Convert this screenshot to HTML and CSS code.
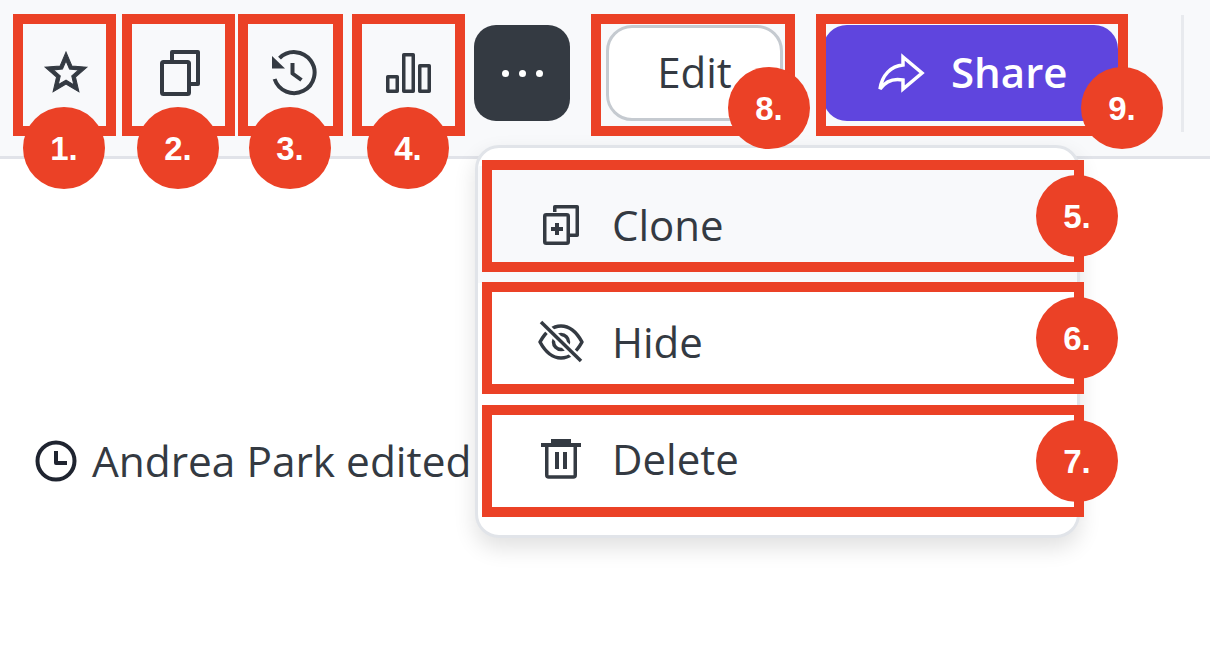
FILE: index.html
```html
<!DOCTYPE html>
<html lang="en">
  <head>
    <meta charset="UTF-8" />
    <meta name="viewport" content="width=device-width, initial-scale=1.0" />
    <title>Dashboard actions</title>
    <link rel="stylesheet" href="styles.css">
  </head>
  <body>
    <header class="toolbar">
      <button class="icon-btn">
        <svg class="icon-star" viewBox="0 0 24 24"><path d="M22 9.24l-7.19-.62L12 2 9.19 8.63 2 9.24l5.46 4.73L5.82 21 12 17.27 18.18 21l-1.63-7.03L22 9.24zM12 15.4l-3.76 2.27 1-4.28-3.32-2.88 4.38-.38L12 6.1l1.71 4.04 4.38.38-3.32 2.88 1 4.28L12 15.4z"/></svg>
      </button>
      <button class="icon-btn">
        <svg class="icon" viewBox="0 0 48 48"><path d="M16 11V3h26v32h-8"/><rect x="6" y="13" width="27" height="32" rx="1.5"/></svg>
      </button>
      <button class="icon-btn">
        <svg class="icon" viewBox="0 0 48 48"><path d="M9.5 9.2A20.5 20.5 0 1 1 4.6 30"/><path class="solid" d="M2 7v12.5h13z"/><path d="M22.5 14v10.5l9 6.5"/></svg>
      </button>
      <button class="icon-btn">
        <svg class="icon thin" viewBox="0 0 48 48"><rect x="3.75" y="27.75" width="9.5" height="14.5"/><rect x="19.75" y="5.75" width="9.5" height="36.5"/><rect x="35.75" y="16.75" width="9.5" height="25.5"/></svg>
      </button>
      <button class="more-btn"><span></span><span></span><span></span></button>
      <button class="edit-btn">Edit</button>
      <button class="share-btn">
        <svg class="icon-share" viewBox="0 0 48 48"><path d="M25 8l19 16-19 16v-9C15 29 7 33 2 40 4 26 13 17 25 16z"/></svg>
        Share
      </button>
      <div class="divider"></div>
    </header>

    <main class="meta">
      <svg class="icon clock" viewBox="0 0 48 48"><circle cx="24" cy="24" r="18.5"/><path d="M24 14v12h11"/></svg>
      <span>Andrea Park edited</span>
    </main>

    <ul class="menu">
      <li class="menu-item active">
        <svg class="icon thin" viewBox="0 0 48 48"><path d="M17.75 11V5.750h22.500v28.500H33"/><rect x="7.750" y="13.750" width="23.500" height="28.500" rx="1.500"/><path class="plus" d="M20 22v12M14 28h12"/></svg>
        Clone
      </li>
      <li class="menu-item">
        <svg class="icon thin" viewBox="0 0 48 48"><path d="M3 24C9 13 17 8 24 8s15 5 21 16c-6 11-14 16-21 16S9 35 3 24z"/><circle cx="24" cy="24" r="7.500"/><path class="gap" d="M4 4l40 39"/><path d="M4 4l40 39"/></svg>
        Hide
      </li>
      <li class="menu-item">
        <svg class="icon thin" viewBox="0 0 48 48"><path class="solid" d="M14 4h20v4h10v4H4V8h10z"/><path d="M9.750 11v29a2 2 0 0 0 2 2h24.500a2 2 0 0 0 2-2V11"/><path class="solid" d="M18 17h4v17h-4zM26 17h4v17h-4z"/></svg>
        Delete
      </li>
    </ul>

    <!-- callouts drawn on top of the screenshot -->
    <div class="frame frame-1"></div>
    <div class="frame frame-2"></div>
    <div class="frame frame-3"></div>
    <div class="frame frame-4"></div>
    <div class="frame frame-5"></div>
    <div class="frame frame-6"></div>
    <div class="frame frame-7"></div>
    <div class="frame frame-8"></div>
    <div class="frame frame-9"></div>

    <div class="badge badge-1">1.</div>
    <div class="badge badge-2">2.</div>
    <div class="badge badge-3">3.</div>
    <div class="badge badge-4">4.</div>
    <div class="badge badge-5">5.</div>
    <div class="badge badge-6">6.</div>
    <div class="badge badge-7">7.</div>
    <div class="badge badge-8">8.</div>
    <div class="badge badge-9">9.</div>
  </body>
</html>
```

FILE: styles.css
```css
body {
  margin: 0;
  height: 662px;
  overflow: hidden;
  position: relative;
  background: white;
  color: #343a42;
  font-family: "Open Sans", sans-serif;
  font-size: 42px;
}
button {
  font-family: inherit;
  font-size: inherit;
  color: inherit;
  padding: 0;
  cursor: pointer;
}
.toolbar {
  display: flex;
  align-items: center;
  box-sizing: border-box;
  height: 159px;
  padding: 0 0 10px 18px;
  background-color: #f8f9fb;
  border-bottom: 3px solid #e1e3e9;
}
.icon-btn {
  width: 96px;
  height: 96px;
  margin-right: 18px;
  display: flex;
  align-items: center;
  justify-content: center;
  background: none;
  border: none;
}
.icon-star {
  width: 50px;
  height: 50px;
  fill: #343a42;
  stroke: #343a42;
  stroke-width: 0.5;
}
.icon {
  width: 48px;
  height: 48px;
  flex: none;
  fill: none;
  stroke: #343a42;
  stroke-width: 4;
  stroke-linejoin: round;
}
.icon.thin {
  stroke-width: 3.5;
}
.icon .solid {
  fill: #343a42;
  stroke: none;
}
.icon .plus {
  stroke-width: 4;
}
.icon .gap {
  stroke: white;
  stroke-width: 8;
}
.more-btn {
  width: 96px;
  height: 96px;
  display: flex;
  align-items: center;
  justify-content: center;
  gap: 10px;
  background-color: #343a42;
  border: none;
  border-radius: 22px;
}
.more-btn span {
  width: 7px;
  height: 7px;
  border-radius: 50%;
  background: white;
}
.edit-btn {
  width: 177px;
  height: 96px;
  margin-left: 36px;
  padding-bottom: 4px;
  background: white;
  border: 3px solid #c5cad0;
  border-radius: 26px;
}
.share-btn {
  width: 295px;
  height: 96px;
  margin-left: 40px;
  padding: 0 0 4px 55px;
  display: flex;
  align-items: center;
  gap: 25px;
  background-color: #5f45de;
  color: white;
  font-weight: 600;
  border: none;
  border-radius: 24px;
}
.icon-share {
  width: 48px;
  height: 48px;
  margin-top: 4px;
  fill: none;
  stroke: white;
  stroke-width: 3.5;
}
.divider {
  width: 3px;
  height: 117px;
  margin-left: 63px;
  background-color: #e8eaee;
}
.meta {
  display: flex;
  align-items: center;
  gap: 12px;
  padding: 274px 0 0 32px;
  font-size: 42.4px;
  line-height: 56px;
}
.clock {
  stroke: #1f2430;
}
.menu {
  position: absolute;
  left: 475px;
  top: 145px;
  width: 605px;
  height: 393px;
  box-sizing: border-box;
  margin: 0;
  padding: 18px 0 0;
  list-style: none;
  background: white;
  border: 3px solid #e1e4e9;
  border-radius: 24px;
  box-shadow: 0 10px 22px rgba(0, 0, 0, 0.12);
}
.menu-item {
  height: 117px;
  display: flex;
  align-items: center;
  gap: 27px;
  padding-left: 59px;
}
.menu-item.active {
  background-color: #f8f9fb;
}
.frame {
  position: absolute;
  box-sizing: border-box;
  border: 10px solid #eb4126;
}
.frame-1 { left: 13px; top: 14px; width: 103px; height: 122px; }
.frame-2 { left: 122px; top: 14px; width: 113px; height: 122px; }
.frame-3 { left: 238px; top: 14px; width: 105px; height: 122px; }
.frame-4 { left: 352px; top: 14px; width: 113px; height: 122px; }
.frame-5 { left: 482px; top: 160px; width: 602px; height: 112px; }
.frame-6 { left: 482px; top: 282px; width: 602px; height: 112px; }
.frame-7 { left: 482px; top: 405px; width: 602px; height: 112px; }
.frame-8 { left: 591px; top: 14px; width: 204px; height: 122px; }
.frame-9 { left: 816px; top: 14px; width: 312px; height: 122px; }
.badge {
  position: absolute;
  box-sizing: border-box;
  width: 82px;
  height: 82px;
  padding-top: 2px;
  display: flex;
  align-items: center;
  justify-content: center;
  border-radius: 50%;
  background-color: #eb4126;
  color: white;
  font-family: "Liberation Sans", Arial, sans-serif;
  font-size: 33px;
  font-weight: bold;
}
.badge-1 { left: 23px; top: 107px; }
.badge-2 { left: 137px; top: 107px; }
.badge-3 { left: 249px; top: 107px; }
.badge-4 { left: 367px; top: 107px; }
.badge-5 { left: 1036px; top: 175px; }
.badge-6 { left: 1036px; top: 297px; }
.badge-7 { left: 1036px; top: 420px; }
.badge-8 { left: 728px; top: 67px; }
.badge-9 { left: 1081px; top: 67px; }
```
